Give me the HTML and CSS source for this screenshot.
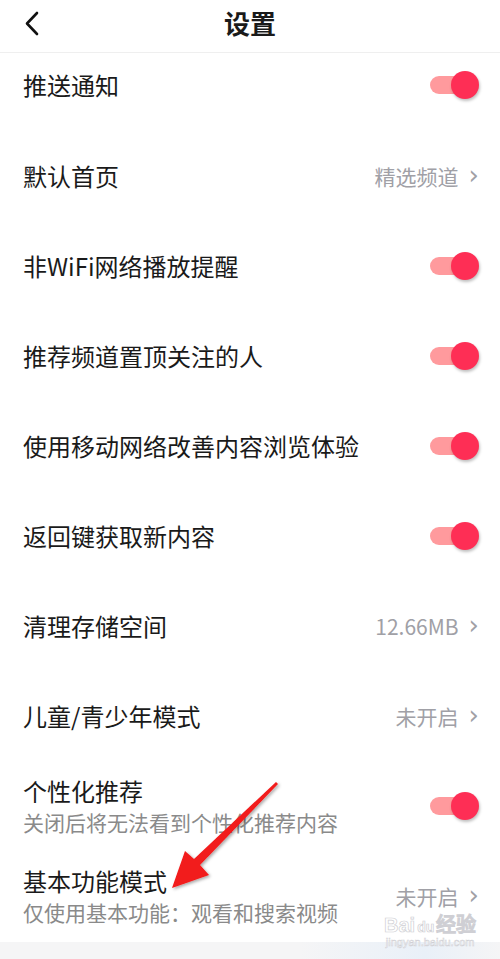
FILE: index.html
```html
<!DOCTYPE html>
<html lang="zh-CN">
<head>
    <meta charset="UTF-8">
    <meta name="viewport" content="width=device-width, initial-scale=1.0">
    <title>设置</title>
    <link rel="stylesheet" href="styles.css">
</head>
<body>
    <div class="page">
        <div class="header">
            <svg class="back" width="20" height="26" viewBox="0 0 20 26">
                <polyline points="13,2 3,12.5 13,23" fill="none" stroke="#111" stroke-width="2.6" stroke-linecap="round" stroke-linejoin="round"/>
            </svg>
            <h1>设置</h1>
        </div>

        <div class="list">
            <div class="row first">
                <span class="title">推送通知</span>
                <span class="switch"><i></i></span>
            </div>
            <div class="row">
                <span class="title">默认首页</span>
                <span class="value">精选频道<b class="arrow">&#x203A;</b></span>
            </div>
            <div class="row">
                <span class="title">非WiFi网络播放提醒</span>
                <span class="switch"><i></i></span>
            </div>
            <div class="row">
                <span class="title">推荐频道置顶关注的人</span>
                <span class="switch"><i></i></span>
            </div>
            <div class="row">
                <span class="title">使用移动网络改善内容浏览体验</span>
                <span class="switch"><i></i></span>
            </div>
            <div class="row">
                <span class="title">返回键获取新内容</span>
                <span class="switch"><i></i></span>
            </div>
            <div class="row">
                <span class="title">清理存储空间</span>
                <span class="value">12.66MB<b class="arrow">&#x203A;</b></span>
            </div>
            <div class="row">
                <span class="title">儿童/青少年模式</span>
                <span class="value">未开启<b class="arrow">&#x203A;</b></span>
            </div>
            <div class="row">
                <div class="text">
                    <span class="title">个性化推荐</span>
                    <span class="sub">关闭后将无法看到个性化推荐内容</span>
                </div>
                <span class="switch"><i></i></span>
            </div>
            <div class="row">
                <div class="text">
                    <span class="title">基本功能模式</span>
                    <span class="sub">仅使用基本功能：观看和搜索视频</span>
                </div>
                <span class="value">未开启<b class="arrow">&#x203A;</b></span>
            </div>
        </div>
        <div class="footer"></div>

        <!-- annotation arrow drawn over the list -->
        <svg class="pointer" width="500" height="959" viewBox="0 0 500 959">
            <defs>
                <filter id="shade" x="-20%" y="-20%" width="140%" height="140%">
                    <feDropShadow dx="1.5" dy="1.5" stdDeviation="1.5" flood-color="#000" flood-opacity="0.35"/>
                </filter>
            </defs>
            <polygon points="172,888 185,851 194,859 276,782 278,784 200,865 209,875" fill="#f21a1a" filter="url(#shade)"/>
        </svg>

        <div class="mark">
            <span class="brand">Bai<em>du</em>经验</span>
            <span class="site">jingyan.baidu.com</span>
        </div>
    </div>
</body>
</html>
```

FILE: styles.css
```css
body {
    margin: 0;
    font-family: "Noto Sans CJK SC", "Noto Sans", sans-serif;
    background-color: #fff;
    color: #1a1a1a;
}
.page {
    position: relative;
    width: 500px;
    height: 959px;
    overflow: hidden;
    background-color: #fff;
}
.header {
    height: 52px;
    display: flex;
    align-items: center;
    justify-content: center;
    border-bottom: 1px solid #efefef;
    position: relative;
}
.back {
    position: absolute;
    left: 24px;
    top: 11px;
}
.header h1 {
    margin: 0;
    font-size: 26px;
    font-weight: bold;
    line-height: 1;
    margin-top: -7px;
}
.row {
    height: 90px;
    padding: 0 23px;
    display: flex;
    align-items: center;
    justify-content: space-between;
    box-sizing: border-box;
}
.row.first {
    height: 78px;
    padding-bottom: 15px;
}
.title {
    font-size: 24px;
    line-height: 1;
}
.text {
    display: flex;
    flex-direction: column;
    gap: 9px;
}
.sub {
    font-size: 21px;
    line-height: 1;
    color: #8a8a8a;
}
.value {
    font-size: 21px;
    color: #a0a0a6;
    display: flex;
    align-items: center;
    margin-right: -2px;
}
.arrow {
    font-weight: normal;
    font-size: 26px;
    margin-left: 10px;
    line-height: 1;
    margin-top: -3px;
    font-family: "DejaVu Sans", sans-serif;
}
.switch {
    position: relative;
    width: 49px;
    height: 28px;
    margin-right: -2px;
}
.switch::before {
    content: "";
    position: absolute;
    left: 0;
    top: 5px;
    width: 40px;
    height: 18px;
    border-radius: 9px;
    background-color: #ff9a9d;
}
.switch i {
    position: absolute;
    right: 0;
    top: 0;
    width: 28px;
    height: 28px;
    border-radius: 50%;
    background-color: #fe2e55;
    box-shadow: 1px 2px 3px rgba(0, 0, 0, 0.25);
}
.footer {
    height: 20px;
    background: linear-gradient(90deg, #f5f5f6 60%, #e9f0f8 85%, #f5f5f6);
    margin-top: 1px;
}
.pointer {
    position: absolute;
    left: 0;
    top: 0;
    pointer-events: none;
}
.mark {
    position: absolute;
    left: 384px;
    top: 915px;
    display: flex;
    flex-direction: column;
    align-items: center;
    color: #fff;
    -webkit-text-stroke: 0.7px #cfcfd4;
    font-family: "Liberation Sans", sans-serif;
    line-height: 1;
}
.brand {
    font-size: 20px;
    font-weight: bold;
}
.brand em {
    font-style: normal;
    font-size: 14px;
    margin: 0 2px;
}
.site {
    font-size: 11px;
    margin-top: 2px;
    -webkit-text-stroke: 0.5px #cfcfd4;
}
```
